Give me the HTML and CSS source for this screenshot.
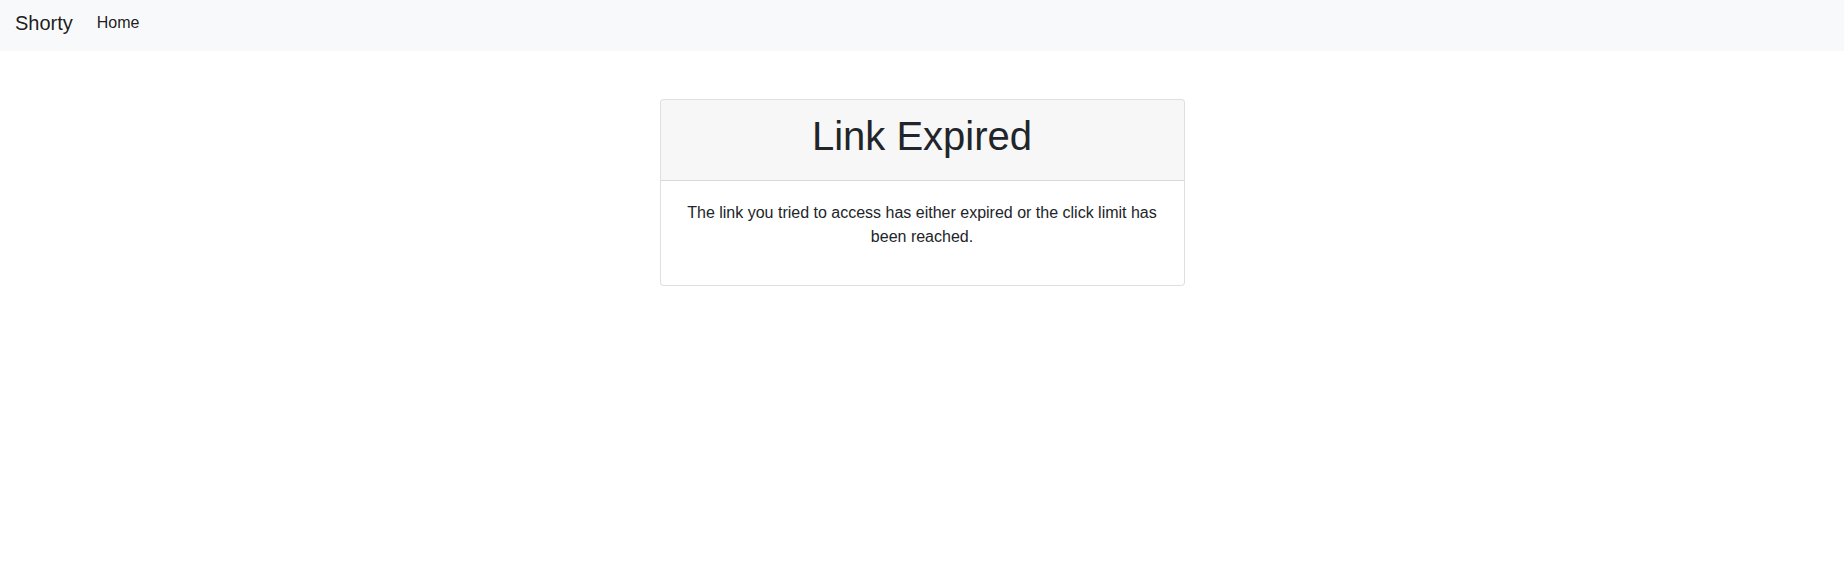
FILE: index.html
```html
<!DOCTYPE html>
<html lang="en">
<head>
<meta charset="utf-8">
<title>Shorty - Link Expired</title>
<link rel="stylesheet" href="styles.css">
</head>
<body>
<nav class="navbar">
  <a class="brand" href="#">Shorty</a>
  <ul class="nav">
    <li><a class="nav-link" href="#">Home</a></li>
  </ul>
</nav>
<main class="main">
  <div class="card">
    <div class="card-header">
      <h1 class="card-title">Link Expired</h1>
    </div>
    <div class="card-body">
      <p class="card-text">The link you tried to access has either expired or the click limit has been reached.</p>
    </div>
  </div>
</main>
</body>
</html>
```
FILE: styles.css
```css
* { box-sizing: border-box; }
html, body {
  margin: 0;
  padding: 0;
  background: #fff;
  color: #212529;
  font-family: "Liberation Sans", Arial, sans-serif;
  font-size: 16px;
  line-height: 1.5;
}
a { text-decoration: none; color: inherit; }

.navbar {
  display: flex;
  align-items: center;
  height: 51px;
  padding: 8px 16px 13px 15px;
  background: #f8f9fa;
}
.brand {
  font-size: 20px;
  line-height: 30px;
  color: rgba(0, 0, 0, 0.9);
  margin-right: 16px;
}
.nav {
  display: flex;
  list-style: none;
  margin: 0;
  padding: 0;
}
.nav-link {
  display: block;
  padding: 0 8px;
  line-height: 24px;
  color: rgba(0, 0, 0, 0.9);
}

.main {
  display: flex;
  justify-content: center;
  padding-top: 48px;
}
.card {
  width: 525px;
  border: 1px solid rgba(0, 0, 0, 0.125);
  border-radius: 4px;
  background: #fff;
  overflow: hidden;
}
.card-header {
  background: rgba(0, 0, 0, 0.03);
  border-bottom: 1px solid rgba(0, 0, 0, 0.125);
  padding: 12px 20px;
  text-align: center;
}
.card-title {
  margin: 0 0 8px;
  font-size: 40px;
  font-weight: 400;
  line-height: 1.2;
}
.card-body {
  padding: 20px;
  text-align: center;
}
.card-text {
  margin: 0 0 16px;
}
```
